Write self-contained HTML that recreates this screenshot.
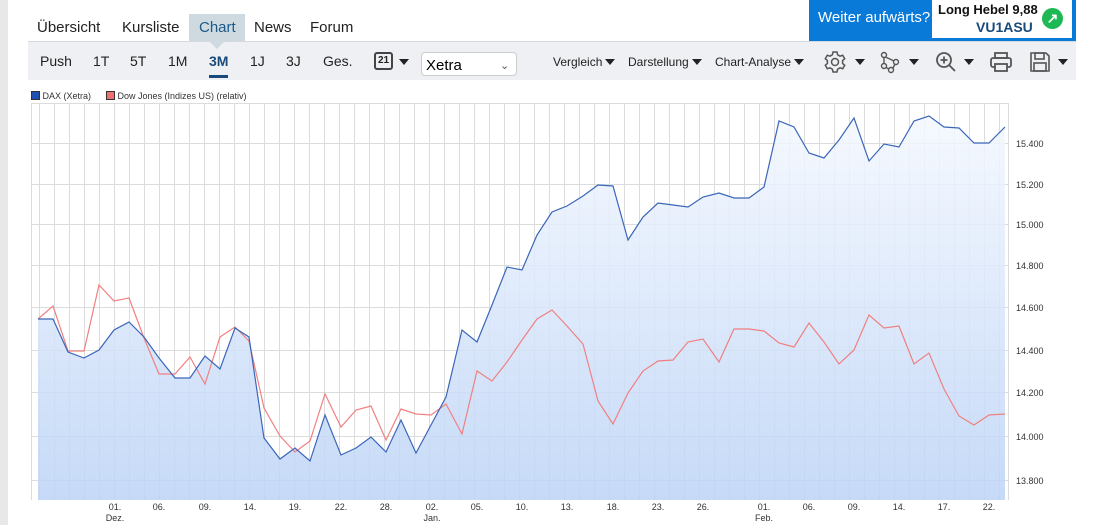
<!DOCTYPE html><html><head><meta charset="utf-8"><style>
body{margin:0;width:1098px;height:525px;background:#fff;font-family:"Liberation Sans",sans-serif;position:relative;overflow:hidden}
.gs{position:absolute;left:0;top:0;width:8px;height:525px;background:#e8e8e8}
.tabs{position:absolute;left:28px;top:14px;height:28px;font-size:15px;color:#222}
.tabs span{position:absolute;top:0;height:27px;line-height:27px;white-space:nowrap}
.bar{position:absolute;left:28px;top:41px;width:1048px;height:38px;background:#eef0f3;border-top:1px solid #d5d8dc}
.bar span{position:absolute;top:11px;font-size:14px;color:#222;white-space:nowrap}
.sm{font-size:12px!important;top:13px!important}
.tri{display:inline-block;width:0;height:0;border-left:5px solid transparent;border-right:5px solid transparent;border-top:6px solid #222;margin-left:3px;vertical-align:1px}
.ic{position:absolute;top:8px}
</style></head><body>
<div class="gs"></div>
<div style="position:absolute;left:189px;top:14px;width:56px;height:28px;background:#cfd9e0"></div>
<div style="position:absolute;left:209px;top:41px;width:0;height:0;border-left:8px solid transparent;border-right:8px solid transparent;border-top:8px solid #cfd9e0;z-index:2"></div>
<div class="tabs">
<span style="left:9px">Übersicht</span><span style="left:94px">Kursliste</span><span style="left:171px;color:#1a5a8a">Chart</span><span style="left:226px">News</span><span style="left:282px">Forum</span></div>
<div style="position:absolute;left:809px;top:0;width:267px;height:41px;background:#0a7ad9"></div>
<div style="position:absolute;left:818px;top:9px;color:#fff;font-size:15px">Weiter aufwärts?</div>
<div style="position:absolute;left:932px;top:0;width:140px;height:38px;background:#fff"></div>
<div style="position:absolute;left:938px;top:2px;font-size:13px;font-weight:bold;color:#111">Long Hebel 9,88</div>
<div style="position:absolute;left:976px;top:19px;font-size:14px;font-weight:bold;color:#1a4a7a">VU1ASU</div>
<div style="position:absolute;left:1042px;top:8px;width:21px;height:21px;border-radius:50%;background:#1db954;color:#fff;font-size:14px;text-align:center;line-height:21px;font-weight:bold">↗</div>
<div class="bar">
<span style="left:12px">Push</span><span style="left:65px">1T</span><span style="left:102px">5T</span><span style="left:140px">1M</span><span style="left:181px;color:#1a4a7a;font-weight:bold">3M</span>
<div style="position:absolute;left:181px;top:33px;width:19px;height:3px;background:#1a4a7a"></div>
<span style="left:222px">1J</span><span style="left:258px">3J</span><span style="left:295px">Ges.</span>
<span style="left:346px;top:10px;border:2px solid #444;border-radius:3px;font-size:10px;font-weight:bold;padding:1px 2px;line-height:12px">21</span><span style="left:368px"><i class="tri"></i></span>
<div style="position:absolute;left:393px;top:10px;width:96px;height:24px;background:#fff;border:1px solid #ccc;border-radius:4px;font-size:15px;line-height:26px;padding-left:4px;box-sizing:border-box">Xetra<span style="left:78px;top:0;font-size:11px;color:#555">⌄</span></div>
<span class="sm" style="left:525px">Vergleich<i class="tri"></i></span>
<span class="sm" style="left:600px">Darstellung<i class="tri"></i></span>
<span class="sm" style="left:687px">Chart-Analyse<i class="tri"></i></span>
<svg class="ic" style="left:795px" width="24" height="24" viewBox="0 0 24 24" fill="none" stroke="#555" stroke-width="1.5"><path d="M10 2h4l.6 2.8 2.4 1.4 2.7-.9 2 3.4-2.1 1.9v2.8l2.1 1.9-2 3.4-2.7-.9-2.4 1.4L14 22h-4l-.6-2.8-2.4-1.4-2.7.9-2-3.4 2.1-1.9v-2.8L2.3 8.7l2-3.4 2.7.9 2.4-1.4z"/><circle cx="12" cy="12" r="3.5"/></svg><span style="left:824px"><i class="tri"></i></span>
<svg class="ic" style="left:851px" width="24" height="24" viewBox="0 0 24 24" fill="none" stroke="#555" stroke-width="1.4"><circle cx="5" cy="5" r="2.5"/><circle cx="5" cy="16" r="2.5"/><circle cx="12" cy="20" r="2.5"/><circle cx="17" cy="12" r="2.5"/><path d="M5 7.5v6M7 17.5l3 1.5M14 18l2-4M6.5 7l8.5 4"/></svg><span style="left:878px"><i class="tri"></i></span>
<svg class="ic" style="left:906px" width="24" height="24" viewBox="0 0 24 24" fill="none" stroke="#555" stroke-width="1.8"><circle cx="10" cy="10" r="7"/><path d="M15 15l6 6M10 6.5v7M6.5 10h7"/></svg><span style="left:933px"><i class="tri"></i></span>
<svg class="ic" style="left:961px" width="24" height="24" viewBox="0 0 24 24" fill="none" stroke="#555" stroke-width="1.8"><rect x="6" y="3" width="12" height="5"/><rect x="2" y="8" width="20" height="9" rx="2"/><rect x="6" y="14" width="12" height="7" fill="#eef0f3"/></svg>
<svg class="ic" style="left:1000px" width="24" height="24" viewBox="0 0 24 24" fill="none" stroke="#555" stroke-width="1.6"><path d="M3 3h15l3 3v15H3z"/><rect x="7" y="3" width="9" height="6"/><rect x="6" y="13" width="12" height="8"/></svg><span style="left:1027px"><i class="tri"></i></span>
</div>
<div style="position:absolute;left:31px;top:91px;font-size:9px;color:#333"><span style="display:inline-block;width:7px;height:7px;background:#2050b0;border:1px solid #333;vertical-align:-1px"></span> DAX (Xetra) &nbsp; &nbsp; &nbsp;<span style="display:inline-block;width:7px;height:7px;background:#f07070;border:1px solid #333;vertical-align:-1px"></span> Dow Jones (Indizes US) (relativ)</div>
<svg style="position:absolute;left:0;top:0" width="1098" height="525">
<defs><linearGradient id="g" x1="0" y1="0" x2="0" y2="1"><stop offset="0" stop-color="#f4f8ff"/><stop offset="1" stop-color="#bcd3f6"/></linearGradient>
<pattern id="v" x="39" y="0" width="15" height="525" patternUnits="userSpaceOnUse"><rect x="0" y="0" width="1" height="525" fill="#dcdcdc"/></pattern></defs>
<rect x="31" y="103" width="977" height="397" fill="url(#v)"/>
<g stroke="#dcdcdc" stroke-width="1">
<line x1="31" x2="1008" y1="103.5" y2="103.5"/><line x1="31" x2="1008" y1="143.5" y2="143.5"/><line x1="31" x2="1008" y1="184.5" y2="184.5"/><line x1="31" x2="1008" y1="224.5" y2="224.5"/><line x1="31" x2="1008" y1="265.5" y2="265.5"/><line x1="31" x2="1008" y1="307.5" y2="307.5"/><line x1="31" x2="1008" y1="350.5" y2="350.5"/><line x1="31" x2="1008" y1="392.5" y2="392.5"/><line x1="31" x2="1008" y1="436.5" y2="436.5"/><line x1="31" x2="1008" y1="480.5" y2="480.5"/>
<line x1="31.5" x2="31.5" y1="103" y2="500"/><line x1="1008.5" x2="1008.5" y1="103" y2="500"/></g>
<polygon fill="url(#g)" fill-opacity="0.85" points="38,500 38,319 53,319 68,352 84,358 99,350 114,330 129,322 144,337 159,358 175,378 190,378 205,356 220,369 235,328 249,337 264,438 280,459 295,448 310,461 325,415 341,455 356,448 371,437 386,452 401,420 416,453 431,425 446,397 462,330 477,342 492,305 507,267 522,270 537,235 552,212 567,206 583,196 598,185 613,186 628,240 643,217 658,203 673,205 688,207 703,197 719,193 734,198 749,198 764,187 779,121 794,127 809,153 824,158 839,140 854,118 869,161 884,144 899,147 914,121 929,116 944,127 959,128 974,143 989,143 1005,127 1005,500"/>
<polyline fill="none" stroke="#f08080" stroke-width="1.2" points="38,319 53,306 68,351 84,351 99,285 114,301 129,298 144,338 159,374 175,374 190,357 205,384 220,337 235,327 249,341 264,408 280,436 295,452 310,441 325,394 341,427 356,410 371,406 386,440 401,409 416,414 431,415 446,404 462,434 477,371 492,381 507,362 522,340 537,319 552,310 567,326 583,344 598,401 613,424 628,393 643,371 658,361 673,360 688,342 703,339 719,362 734,329 749,329 764,331 779,343 794,347 809,323 824,342 839,364 854,350 869,315 884,328 899,326 914,364 929,353 944,389 959,416 974,425 989,415 1005,414"/>
<polyline fill="none" stroke="#3a66b8" stroke-width="1.2" points="38,319 53,319 68,352 84,358 99,350 114,330 129,322 144,337 159,358 175,378 190,378 205,356 220,369 235,328 249,337 264,438 280,459 295,448 310,461 325,415 341,455 356,448 371,437 386,452 401,420 416,453 431,425 446,397 462,330 477,342 492,305 507,267 522,270 537,235 552,212 567,206 583,196 598,185 613,186 628,240 643,217 658,203 673,205 688,207 703,197 719,193 734,198 749,198 764,187 779,121 794,127 809,153 824,158 839,140 854,118 869,161 884,144 899,147 914,121 929,116 944,127 959,128 974,143 989,143 1005,127"/>
<g font-size="9" fill="#333" font-family="Liberation Sans,sans-serif">
<text x="1016" y="147">15.400</text><text x="1016" y="188">15.200</text><text x="1016" y="228">15.000</text><text x="1016" y="269">14.800</text><text x="1016" y="311">14.600</text><text x="1016" y="354">14.400</text><text x="1016" y="396">14.200</text><text x="1016" y="440">14.000</text><text x="1016" y="484">13.800</text>
<g text-anchor="middle"><text x="115" y="510">01.</text><text x="159" y="510">06.</text><text x="205" y="510">09.</text><text x="250" y="510">14.</text><text x="295" y="510">19.</text><text x="341" y="510">22.</text><text x="386" y="510">28.</text><text x="432" y="510">02.</text><text x="477" y="510">05.</text><text x="522" y="510">10.</text><text x="567" y="510">13.</text><text x="613" y="510">18.</text><text x="658" y="510">23.</text><text x="703" y="510">26.</text><text x="764" y="510">01.</text><text x="809" y="510">06.</text><text x="854" y="510">09.</text><text x="899" y="510">14.</text><text x="944" y="510">17.</text><text x="989" y="510">22.</text>
<text x="115" y="521">Dez.</text><text x="432" y="521">Jan.</text><text x="764" y="521">Feb.</text></g></g>
</svg>
</body></html>
